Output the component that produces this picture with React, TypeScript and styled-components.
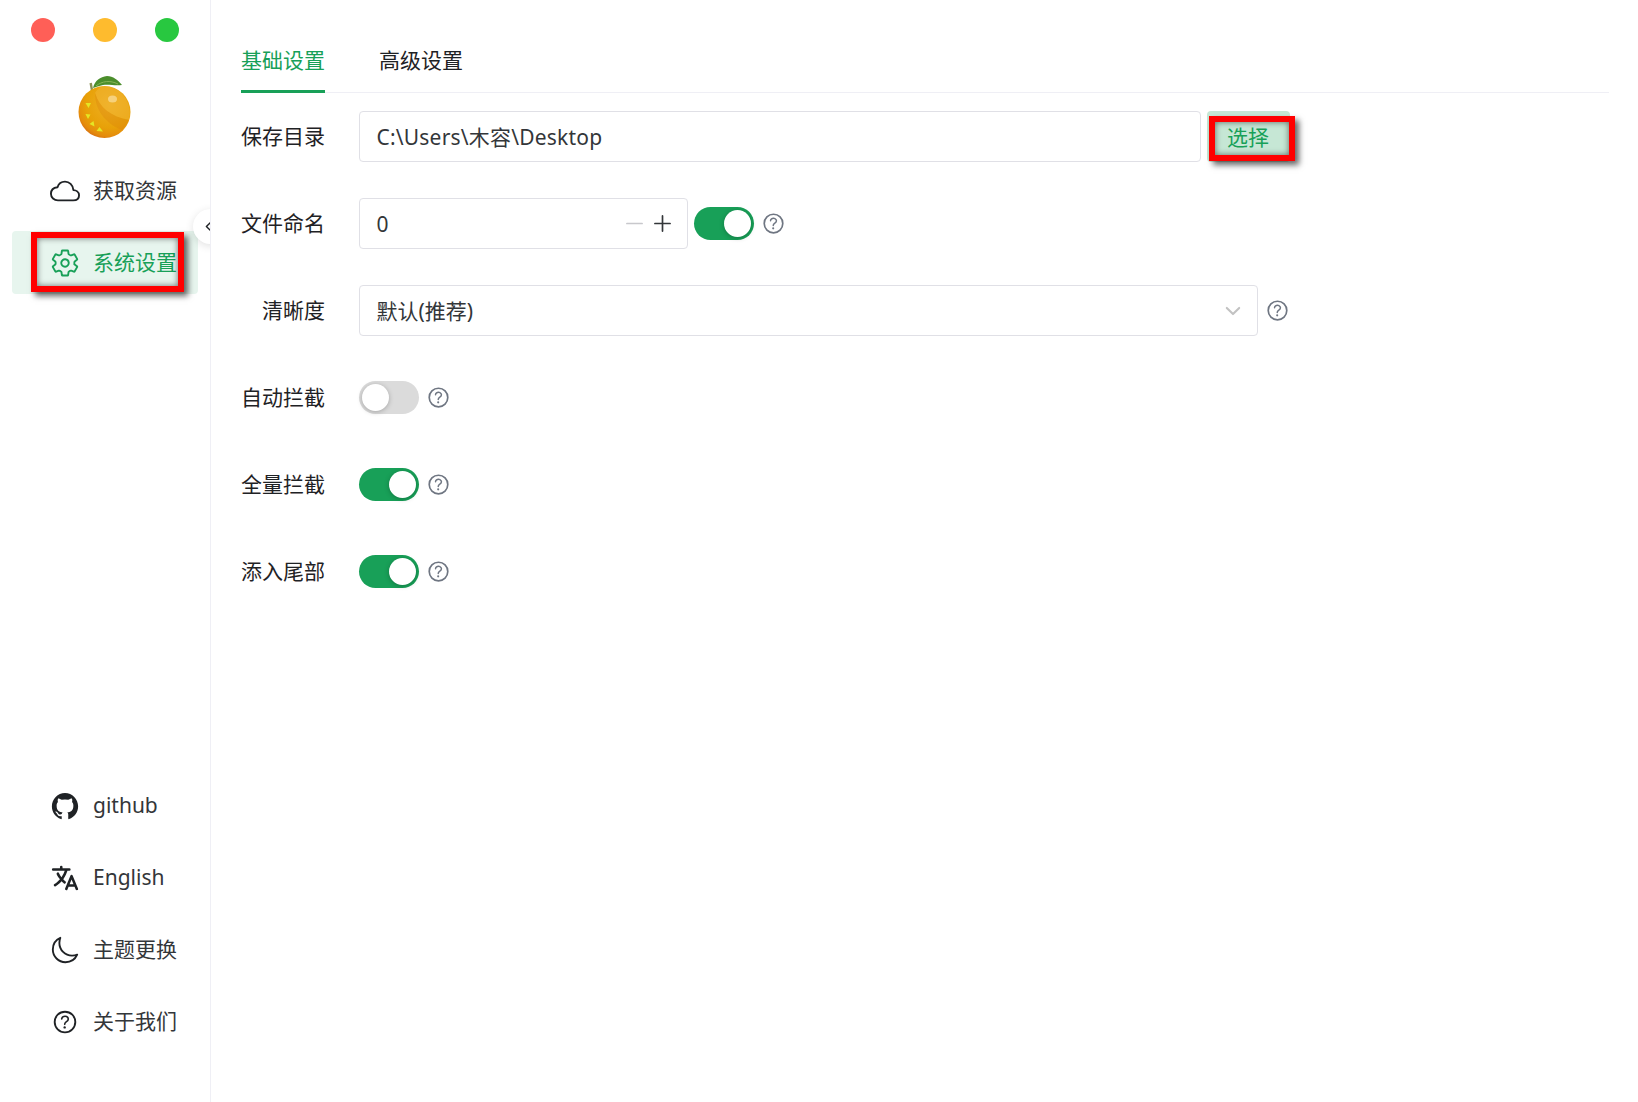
import {createGlobalStyle} from "styled-components";
import styled from "styled-components";
import {
    IoAdd,
    IoChevronBack,
    IoChevronDown,
    IoCloudOutline,
    IoHelpCircleOutline,
    IoLanguage,
    IoLogoGithub,
    IoMoonOutline,
    IoRemove,
    IoSettingsOutline,
} from "react-icons/io5";

const GlobalStyle = createGlobalStyle`
    html, body {
        margin: 0;
        padding: 0;
        background: #fff;
        color: #333639;
        font-family: "Noto Sans", "Noto Sans CJK SC", sans-serif;
        font-size: 21px;
    }
`;

const Layout = styled.div`
    display: flex;
    width: 1638px;
    height: 1102px;
    overflow: hidden;
`;

const Sidebar = styled.aside`
    position: relative;
    flex: 0 0 211px;
    box-sizing: border-box;
    display: flex;
    flex-direction: column;
    border-right: 1px solid #efeff5;
    overflow: hidden;
    padding-bottom: 49px;
`;

const TrafficLights = styled.div`
    display: flex;
    justify-content: center;
    gap: 38px;
    padding-top: 18px;
`;

const Dot = styled.span<{$color: string}>`
    width: 24px;
    height: 24px;
    border-radius: 50%;
    background: ${(p) => p.$color};
`;

const LogoBox = styled.div`
    display: flex;
    justify-content: center;
    margin: 33px 0 20px;
`;

const Menu = styled.nav<{$bottom?: boolean}>`
    display: flex;
    flex-direction: column;
    gap: 9px;
    margin: ${(p) => (p.$bottom ? "auto 12px 0" : "0 12px")};
`;

const MenuItem = styled.div<{$active?: boolean}>`
    position: relative;
    display: flex;
    align-items: center;
    gap: 13px;
    height: 63px;
    padding-left: 38px;
    border-radius: 4px;
    color: ${(p) => (p.$active ? "#18a058" : "#333639")};
    background: ${(p) => (p.$active ? "#e7f5ee" : "transparent")};
    svg {
        flex: 0 0 30px;
        font-size: 30px;
        color: ${(p) => (p.$active ? "#18a058" : "#1f2225")};
    }
`;

const MenuLabel = styled.span`
    padding-bottom: 1px;
    line-height: 28px;
`;

const CollapseButton = styled.div`
    position: absolute;
    left: 193px;
    top: 209px;
    width: 35px;
    height: 35px;
    border-radius: 50%;
    background: #fff;
    box-shadow: 0 2px 8px rgba(0, 0, 0, 0.12);
    display: flex;
    align-items: center;
    padding-left: 7.5px;
    box-sizing: border-box;
    font-size: 15px;
    color: #1f2225;
`;

const Annotation = styled.div<{$left: number; $top: number; $width: number; $height: number}>`
    position: absolute;
    left: ${(p) => p.$left}px;
    top: ${(p) => p.$top}px;
    width: ${(p) => p.$width}px;
    height: ${(p) => p.$height}px;
    box-sizing: border-box;
    border: 6px solid #ff0000;
    box-shadow: 4px 4px 6px rgba(0, 0, 0, 0.6), inset 0 0 6px rgba(0, 0, 0, 0.55);
    pointer-events: none;
`;

const Main = styled.main`
    flex: 1;
    min-width: 0;
    padding: 0 29px 0 30px;
`;

const Tabs = styled.div`
    display: flex;
    gap: 54px;
    height: 92px;
    border-bottom: 1px solid #efeff5;
`;

const Tab = styled.div<{$active?: boolean}>`
    display: flex;
    align-items: flex-end;
    height: 93px;
    box-sizing: border-box;
    padding-bottom: 16px;
    line-height: 28px;
    color: ${(p) => (p.$active ? "#18a058" : "#1f2225")};
    border-bottom: 3px solid ${(p) => (p.$active ? "#18a058" : "transparent")};
`;

const Form = styled.div`
    display: flex;
    flex-direction: column;
    gap: 36px;
    padding-top: 18px;
`;

const Row = styled.div`
    display: flex;
    align-items: center;
    height: 51px;
`;

const Label = styled.label`
    flex: 0 0 84px;
    margin-right: 33.5px;
    padding-bottom: 2px;
    line-height: 28px;
    text-align: right;
    color: #1f2225;
    white-space: nowrap;
`;

const Field = styled.div<{$width: number}>`
    display: flex;
    align-items: center;
    box-sizing: border-box;
    width: ${(p) => p.$width}px;
    height: 51px;
    padding: 0 17px;
    border: 1.5px solid #e0e0e6;
    border-radius: 4px;
    background: #fff;
    color: #333639;
`;

const FieldText = styled.span<{$spaced?: boolean}>`
    flex: 1;
    line-height: 28px;
    letter-spacing: ${(p) => (p.$spaced ? "0.2px" : "0")};
`;

const StepIcons = styled.div`
    display: flex;
    align-items: center;
    gap: 1px;
    margin-right: -6px;
    font-size: 27px;
`;

const Chevron = styled(IoChevronDown)`
    font-size: 22px;
    color: #c2c2c2;
    margin-right: -4px;
`;

const PickButton = styled.button`
    position: relative;
    width: 83px;
    height: 51px;
    margin-left: 6px;
    padding: 0 0 2px;
    border: none;
    border-radius: 4px;
    background: #c6e7d5;
    color: #18a058;
    font: inherit;
`;

const Switch = styled.div<{$on: boolean}>`
    position: relative;
    flex: 0 0 60px;
    width: 60px;
    height: 33px;
    border-radius: 17px;
    background: ${(p) => (p.$on ? "#18a058" : "#dbdbdb")};
    &::after {
        content: "";
        position: absolute;
        top: 3px;
        left: ${(p) => (p.$on ? "30px" : "3px")};
        width: 27px;
        height: 27px;
        border-radius: 50%;
        background: #fff;
        box-shadow: 0 1px 5px rgba(0, 0, 0, 0.25);
    }
`;

const SwitchAfterField = styled(Switch)`
    margin-left: 6px;
`;

const Help = styled(IoHelpCircleOutline)`
    flex: 0 0 27px;
    font-size: 27px;
    margin-left: 6px;
    color: #6f7682;
`;

function Logo() {
    return (
        <svg width="56" height="64" viewBox="0 0 56 64">
            <defs>
                <radialGradient id="peel" cx="0.6" cy="0.35" r="0.7">
                    <stop offset="0" stopColor="#eeb024" />
                    <stop offset="0.65" stopColor="#e8a108" />
                    <stop offset="0.88" stopColor="#e58c0c" />
                    <stop offset="1" stopColor="#d66f12" />
                </radialGradient>
            </defs>
            <path d="M16 13 C18 5 23 2 30 1 C36 1 41 5 45 10 C38 11 32 9 26 10 C22 11 19 12 16 13 Z" fill="#4b8e2c" />
            <path d="M19 11 C25 6 33 5 41 9" stroke="#86b556" strokeWidth="1" fill="none" />
            <path d="M13.7 8 L15.3 17" stroke="#8a8f52" strokeWidth="2.4" />
            <circle cx="27.5" cy="37" r="26" fill="url(#peel)" />
            <path d="M18 18 C22 32 34 42 52 45 C56 30 46 12 28 11 C24 11 20 14 18 18 Z" fill="#f2b535" opacity="0.5" />
            <path d="M18 18 C22 32 34 42 52 45 C50 49 47 52 45 55 C32 50 18 38 18 18 Z" fill="#d67f0c" opacity="0.3" />
            <ellipse cx="35.5" cy="24" rx="4.5" ry="3.5" fill="#f8dc98" opacity="0.75" />
            <path d="M8.5 28 l5.5 0 l-2.5 5 Z M8.5 39 l5 0.5 l-2.5 4.5 Z M12.5 49 l4 -3 l1 5.5 Z M19.5 56 l3 -4 l3.5 4.5 Z" fill="#e4e625" />
        </svg>
    );
}

export default function App() {
    return (
        <Layout>
            <GlobalStyle />
            <Sidebar>
                <TrafficLights>
                    <Dot $color="#ff5f57" />
                    <Dot $color="#febb2e" />
                    <Dot $color="#28c840" />
                </TrafficLights>
                <LogoBox>
                    <Logo />
                </LogoBox>
                <Menu>
                    <MenuItem>
                        <IoCloudOutline />
                        <MenuLabel>获取资源</MenuLabel>
                    </MenuItem>
                    <MenuItem $active>
                        <IoSettingsOutline />
                        <MenuLabel>系统设置</MenuLabel>
                        <Annotation $left={19} $top={1} $width={153} $height={60} />
                    </MenuItem>
                </Menu>
                <Menu $bottom>
                    <MenuItem>
                        <IoLogoGithub />
                        <MenuLabel>github</MenuLabel>
                    </MenuItem>
                    <MenuItem>
                        <IoLanguage />
                        <MenuLabel>English</MenuLabel>
                    </MenuItem>
                    <MenuItem>
                        <IoMoonOutline />
                        <MenuLabel>主题更换</MenuLabel>
                    </MenuItem>
                    <MenuItem>
                        <IoHelpCircleOutline />
                        <MenuLabel>关于我们</MenuLabel>
                    </MenuItem>
                </Menu>
                <CollapseButton>
                    <IoChevronBack />
                </CollapseButton>
            </Sidebar>
            <Main>
                <Tabs>
                    <Tab $active>基础设置</Tab>
                    <Tab>高级设置</Tab>
                </Tabs>
                <Form>
                    <Row>
                        <Label>保存目录</Label>
                        <Field $width={842}>
                            <FieldText $spaced>C:\Users\木容\Desktop</FieldText>
                        </Field>
                        <PickButton>
                            选择
                            <Annotation $left={2} $top={5} $width={86} $height={45} />
                        </PickButton>
                    </Row>
                    <Row>
                        <Label>文件命名</Label>
                        <Field $width={329}>
                            <FieldText>0</FieldText>
                            <StepIcons>
                                <IoRemove color="#c8c8cc" />
                                <IoAdd color="#333639" />
                            </StepIcons>
                        </Field>
                        <SwitchAfterField $on />
                        <Help />
                    </Row>
                    <Row>
                        <Label>清晰度</Label>
                        <Field $width={899}>
                            <FieldText>默认(推荐)</FieldText>
                            <Chevron />
                        </Field>
                        <Help />
                    </Row>
                    <Row>
                        <Label>自动拦截</Label>
                        <Switch $on={false} />
                        <Help />
                    </Row>
                    <Row>
                        <Label>全量拦截</Label>
                        <Switch $on />
                        <Help />
                    </Row>
                    <Row>
                        <Label>添入尾部</Label>
                        <Switch $on />
                        <Help />
                    </Row>
                </Form>
            </Main>
        </Layout>
    );
}
